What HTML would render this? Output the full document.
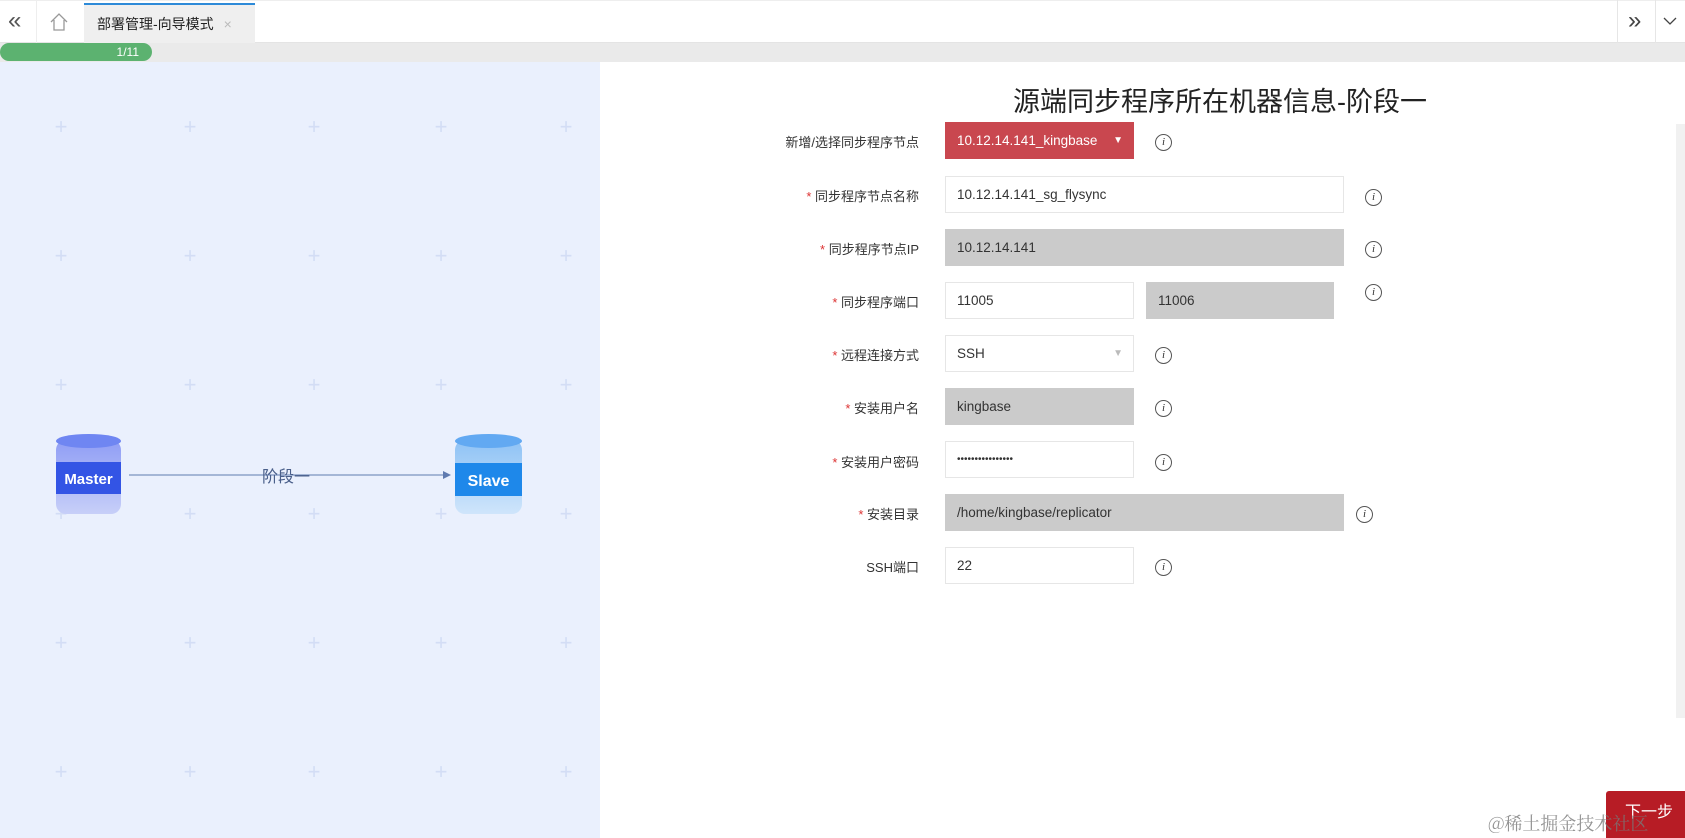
<!DOCTYPE html>
<html><head><meta charset="utf-8"><style>
*{margin:0;padding:0;box-sizing:border-box}
body{width:1685px;height:838px;overflow:hidden;background:#fff;font-family:"Liberation Sans","Noto Sans CJK SC",sans-serif;position:relative;color:#333}
.abs{position:absolute}
.top{left:0;top:0;width:1685px;height:43px;background:#fff;border-top:1px solid #eee;border-bottom:1px solid #e4e4e4}
.prog{left:0;top:43px;width:1685px;height:19px;background:#eaeaea}
.pill{left:0;top:43px;width:152px;height:18px;background:#5cb270;border-radius:9px;color:#fff;font-size:12px;text-align:right;padding-right:13px;line-height:18px}
.left{left:0;top:62px;width:600px;height:776px;background:#eaf0fd}
.plus{position:absolute;color:#d3ddf5;font-size:22px;line-height:20px;width:20px;text-align:center}
.lbl{position:absolute;right:766px;font-size:13px;color:#333;text-align:right;white-space:nowrap}
.lbl b{color:#d33;font-weight:normal}
.inp{position:absolute;height:37px;border:1px solid #e6e6e6;font-size:13.5px;padding-left:11px;line-height:35px;color:#333;background:#fff}
.g{background:#cbcbcb;border-color:#cbcbcb}
.info{position:absolute;width:17px;height:17px;border:1px solid #555;border-radius:50%;font:italic 11px "Liberation Serif",serif;text-align:center;line-height:15px;color:#333}
</style></head><body>
<div class="abs top"></div>
<div class="abs" style="left:36px;top:0;width:1px;height:43px;background:#eee"></div>
<div class="abs" style="left:8px;top:7px;font-size:24px;color:#555">«</div>
<svg class="abs" style="left:49px;top:12px" width="20" height="20" viewBox="0 0 20 20"><path d="M2 10 L10 2 L18 10 M5 8 V18 H15 V8" fill="none" stroke="#999" stroke-width="1.3"/></svg>
<div class="abs" style="left:84px;top:3px;width:171px;height:40px;background:#efefef;border-top:2px solid #2d8ad8;font-size:14px;line-height:38px;padding-left:13px;color:#222">部署管理-向导模式 <span style="color:#bbb;margin-left:6px">×</span></div>
<div class="abs" style="left:1617px;top:0;width:1px;height:43px;background:#e6e6e6"></div>
<div class="abs" style="left:1655px;top:0;width:1px;height:43px;background:#e6e6e6"></div>
<div class="abs" style="left:1628px;top:7px;font-size:24px;color:#444">»</div>
<svg class="abs" style="left:1662px;top:16px" width="16" height="10"><path d="M2 2 L8 8 L14 2" fill="none" stroke="#444" stroke-width="1.3"/></svg>
<div class="abs prog"></div>
<div class="abs pill">1/11</div>
<div class="abs left"></div>
<div class="abs" style="left:0;top:62px;width:600px;height:776px">
<div class="plus" style="left:51px;top:55px">+</div><div class="plus" style="left:180px;top:55px">+</div><div class="plus" style="left:304px;top:55px">+</div><div class="plus" style="left:431px;top:55px">+</div><div class="plus" style="left:556px;top:55px">+</div>
<div class="plus" style="left:51px;top:184px">+</div><div class="plus" style="left:180px;top:184px">+</div><div class="plus" style="left:304px;top:184px">+</div><div class="plus" style="left:431px;top:184px">+</div><div class="plus" style="left:556px;top:184px">+</div>
<div class="plus" style="left:51px;top:313px">+</div><div class="plus" style="left:180px;top:313px">+</div><div class="plus" style="left:304px;top:313px">+</div><div class="plus" style="left:431px;top:313px">+</div><div class="plus" style="left:556px;top:313px">+</div>
<div class="plus" style="left:51px;top:442px">+</div><div class="plus" style="left:180px;top:442px">+</div><div class="plus" style="left:304px;top:442px">+</div><div class="plus" style="left:431px;top:442px">+</div><div class="plus" style="left:556px;top:442px">+</div>
<div class="plus" style="left:51px;top:571px">+</div><div class="plus" style="left:180px;top:571px">+</div><div class="plus" style="left:304px;top:571px">+</div><div class="plus" style="left:431px;top:571px">+</div><div class="plus" style="left:556px;top:571px">+</div>
<div class="plus" style="left:51px;top:700px">+</div><div class="plus" style="left:180px;top:700px">+</div><div class="plus" style="left:304px;top:700px">+</div><div class="plus" style="left:431px;top:700px">+</div><div class="plus" style="left:556px;top:700px">+</div>
</div>
<svg class="abs" style="left:40px;top:430px" width="500" height="95">
<defs><linearGradient id="m" x1="0" y1="0" x2="0" y2="1"><stop offset="0" stop-color="#8f9df5"/><stop offset="1" stop-color="#c7cff8"/></linearGradient>
<linearGradient id="s" x1="0" y1="0" x2="0" y2="1"><stop offset="0" stop-color="#8ec2f5"/><stop offset="1" stop-color="#cfe5fb"/></linearGradient></defs>
<rect x="16" y="10" width="65" height="74" rx="10" fill="url(#m)"/><ellipse cx="48.5" cy="11" rx="32.5" ry="7" fill="#6f86f2"/>
<rect x="16" y="32" width="65" height="32" fill="#3354e5"/>
<text x="48.5" y="54" fill="#fff" font-size="15" font-weight="bold" text-anchor="middle" font-family="Liberation Sans">Master</text>
<rect x="415" y="10" width="67" height="74" rx="10" fill="url(#s)"/><ellipse cx="448.5" cy="11" rx="33.5" ry="7" fill="#62a9f2"/>
<rect x="415" y="33" width="67" height="33" fill="#1e88ea"/>
<text x="448.5" y="56" fill="#fff" font-size="16" font-weight="bold" text-anchor="middle" font-family="Liberation Sans">Slave</text>
<line x1="89" y1="45" x2="405" y2="45" stroke="#5f7bb0" stroke-width="1"/><path d="M403 41 L411 45 L403 49 Z" fill="#5f7bb0"/>
<text x="222" y="52" fill="#4a5f8a" font-size="16" font-family="Noto Sans CJK SC">阶段一</text>
</svg>
<div class="abs" style="left:600px;top:80px;width:1240px;text-align:center;font-size:27px;color:#222">源端同步程序所在机器信息-阶段一</div>
<div class="abs" style="left:1676px;top:124px;width:9px;height:594px;background:#f1f1f1"></div>

<div class="lbl" style="top:132px">新增/选择同步程序节点</div>
<div class="inp" style="left:945px;top:122px;width:189px;background:#c9474f;border-color:#c9474f;color:#fff">10.12.14.141_kingbase<span style="position:absolute;right:10px;top:0;font-size:10px">▼</span></div>
<div class="info" style="left:1155px;top:134px">i</div>

<div class="lbl" style="top:186px"><b>* </b>同步程序节点名称</div>
<div class="inp" style="left:945px;top:176px;width:399px">10.12.14.141_sg_flysync</div>
<div class="info" style="left:1365px;top:189px">i</div>

<div class="lbl" style="top:239px"><b>* </b>同步程序节点IP</div>
<div class="inp g" style="left:945px;top:229px;width:399px">10.12.14.141</div>
<div class="info" style="left:1365px;top:241px">i</div>

<div class="lbl" style="top:292px"><b>* </b>同步程序端口</div>
<div class="inp" style="left:945px;top:282px;width:189px">11005</div>
<div class="inp g" style="left:1146px;top:282px;width:188px">11006</div>
<div class="info" style="left:1365px;top:284px">i</div>

<div class="lbl" style="top:345px"><b>* </b>远程连接方式</div>
<div class="inp" style="left:945px;top:335px;width:189px">SSH<span style="position:absolute;right:10px;top:0;font-size:10px;color:#bbb">▼</span></div>
<div class="info" style="left:1155px;top:347px">i</div>

<div class="lbl" style="top:398px"><b>* </b>安装用户名</div>
<div class="inp g" style="left:945px;top:388px;width:189px">kingbase</div>
<div class="info" style="left:1155px;top:400px">i</div>

<div class="lbl" style="top:452px"><b>* </b>安装用户密码</div>
<div class="inp" style="left:945px;top:441px;width:189px;font-size:10px">••••••••••••••••</div>
<div class="info" style="left:1155px;top:454px">i</div>

<div class="lbl" style="top:504px"><b>* </b>安装目录</div>
<div class="inp g" style="left:945px;top:494px;width:399px">/home/kingbase/replicator</div>
<div class="info" style="left:1356px;top:506px">i</div>

<div class="lbl" style="top:557px">SSH端口</div>
<div class="inp" style="left:945px;top:547px;width:189px">22</div>
<div class="info" style="left:1155px;top:559px">i</div>

<div class="abs" style="left:1606px;top:791px;width:79px;height:47px;background:#b71c25;border-radius:3px 0 0 0;color:#fff;font-size:16px;line-height:44px;padding-left:19px">下一步</div>
<div class="abs" style="left:1488px;top:810px;font-size:18px;color:rgba(120,120,120,.8);font-family:'Noto Serif CJK SC','Liberation Sans',serif">@稀土掘金技术社区</div>
</body></html>
